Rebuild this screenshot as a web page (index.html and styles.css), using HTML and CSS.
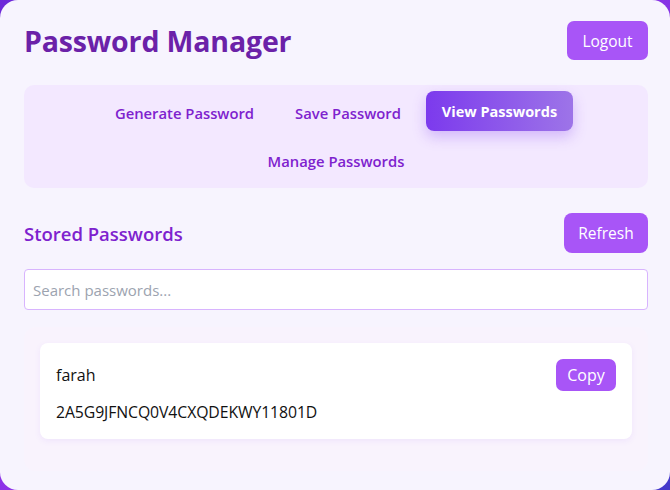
FILE: index.html
```html
<!DOCTYPE html>
<html lang="en">
<head>
<meta charset="utf-8">
<title>Password Manager</title>
<link rel="stylesheet" href="styles.css">
</head>
<body>
<div class="app">
  <header class="header">
    <h1 class="title">Password Manager</h1>
    <button class="btn btn-logout">Logout</button>
  </header>
  <nav class="nav">
    <button class="nav-btn">Generate Password</button>
    <button class="nav-btn">Save Password</button>
    <button class="nav-btn active">View Passwords</button>
    <button class="nav-btn">Manage Passwords</button>
  </nav>
  <section class="stored">
    <div class="stored-head">
      <h2 class="subtitle">Stored Passwords</h2>
      <button class="btn btn-refresh">Refresh</button>
    </div>
    <input class="search" type="text" placeholder="Search passwords...">
    <div class="list">
      <div class="item">
        <div class="item-row">
          <span class="item-name">farah</span>
          <button class="btn btn-copy">Copy</button>
        </div>
        <div class="item-pass">2A5G9JFNCQ0V4CXQDEKWY11801D</div>
      </div>
    </div>
  </section>
</div>
</body>
</html>
```

FILE: styles.css
```css
* { box-sizing: border-box; }
html, body { margin: 0; height: 100%; }
body {
  font-family: "Open Sans", "Noto Sans", sans-serif;
  background: linear-gradient(135deg, #6d28d9 0%, #9333ea 50%, #4338ca 100%);
  overflow: hidden;
}
.app {
  height: 100vh;
  background: #f7f4fe;
  border-radius: 18px;
  padding: 21px 22px 24px 24px;
  display: flex;
  flex-direction: column;
}
.header {
  display: flex;
  justify-content: space-between;
  align-items: center;
}
.title {
  margin: 0;
  font-size: 28.5px;
  font-weight: 700;
  color: #6b21a8;
  letter-spacing: -0.15px;
}
.btn {
  font-family: inherit;
  border: none;
  background: #a855f7;
  color: #fff;
  font-size: 15.5px;
  border-radius: 7px;
  cursor: pointer;
}
.btn-logout { width: 81px; height: 39px; padding: 0; }
.nav {
  margin: 25px 0 0 0;
  width: 624px;
  background: #f3e8ff;
  border-radius: 10px;
  padding: 8px 0 7px;
  display: flex;
  flex-wrap: wrap;
  justify-content: center;
  align-items: center;
  column-gap: 9px;
  row-gap: 8px;
}
.nav-btn {
  font-family: inherit;
  border: none;
  background: transparent;
  color: #7e22ce;
  font-size: 14.8px;
  font-weight: 600;
  height: 40px;
  padding: 0 16px;
  border-radius: 8px;
}
.nav-btn.active {
  color: #fff;
  font-size: 14.5px;
  font-weight: 700;
  background: linear-gradient(90deg, #7c3aed 0%, #9d74e8 100%);
  box-shadow: 0 6px 14px rgba(124, 58, 237, 0.28);
  transform: translateY(-2px);
}
.stored { margin-top: 25px; width: 624px; }
.stored-head {
  display: flex;
  justify-content: space-between;
  align-items: center;
}
.subtitle {
  margin: 0;
  font-size: 18.5px;
  font-weight: 600;
  color: #7e22ce;
}
.btn-refresh { width: 84px; height: 40px; padding: 0; border-radius: 8px; }
.search {
  display: block;
  margin-top: 16px;
  width: 100%;
  height: 41px;
  border: 1px solid #d8b4fe;
  border-radius: 4px;
  background: #fff;
  padding: 0 8px;
  font-family: inherit;
  font-size: 15px;
  color: #111827;
  outline: none;
}
.search::placeholder { color: #9ca3af; }
.list {
  margin-top: 17px;
  background: #f9f3fd;
  border-radius: 12px;
  padding: 16px 16px 32px;
}
.item {
  background: #fff;
  border-radius: 8px;
  padding: 16px;
  box-shadow: 0 2px 6px rgba(124, 58, 237, 0.08);
}
.item-row {
  display: flex;
  justify-content: space-between;
  align-items: center;
}
.item-name { font-size: 16px; color: #111; }
.btn-copy { width: 60px; height: 32px; padding: 0; font-size: 16px; border-radius: 7px; }
.item-pass { margin-top: 10px; font-size: 15.8px; color: #111; line-height: 22px; letter-spacing: -0.1px; }
```
